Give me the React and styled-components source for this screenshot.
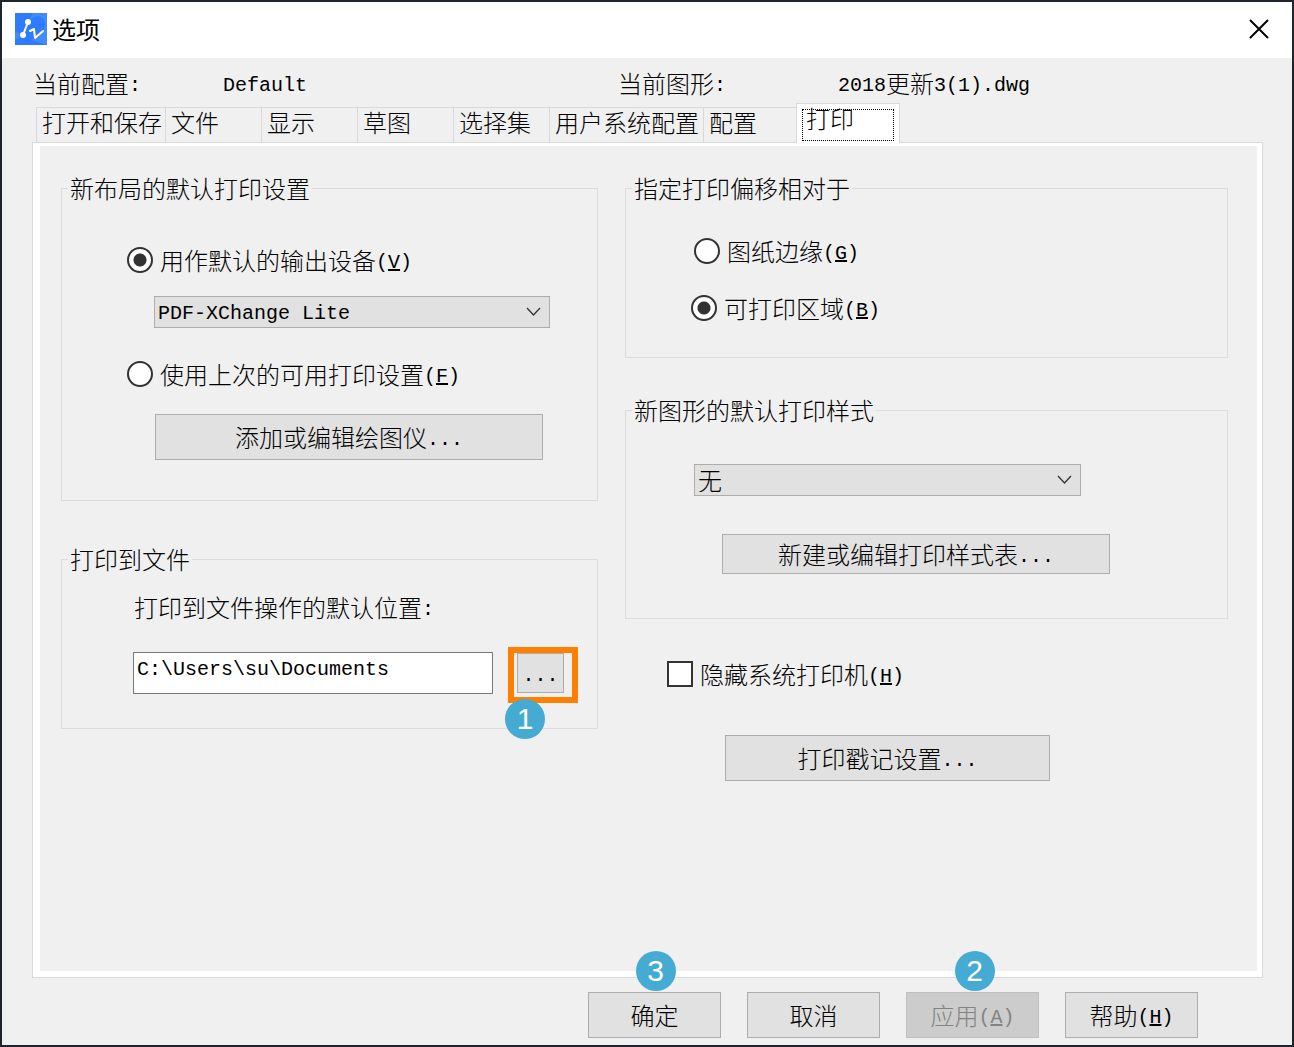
import React, { useState } from "react";
import styled, { createGlobalStyle } from "styled-components";

const GlobalStyle = createGlobalStyle`
  * {
    box-sizing: border-box;
  }

  body {
    margin: 0;
    background: #20242b;
  }

  body, button, input, select {
    color: #000;
    font-family: "Noto Sans CJK SC", sans-serif;
    font-size: 24px;
    font-weight: 300;
    line-height: 24px;
  }
`;

const Window = styled.div`
  display: flex;
  flex-direction: column;
  min-height: 100vh;
  border: 2px solid #20242b;
  background: #f0f0f0;
`;

const TitleBar = styled.header`
  display: flex;
  align-items: center;
  height: 56px;
  padding: 0 22px 2px 13px;
  background: #fff;

  h1 {
    flex: 1;
    margin: 0 0 0 5px;
    font-size: 24px;
    font-weight: 400;
  }
`;

const CloseButton = styled.button`
  display: flex;
  padding: 0;
  border: 0;
  background: none;
`;

const Body = styled.main`
  display: flex;
  flex: 1;
  flex-direction: column;
  padding: 0 29px 0 30px;
`;

const Info = styled.dl`
  display: grid;
  grid-template-columns: 38fr 79fr 44fr 85fr;
  margin: 0;
  padding: 13px 0 8px 1px;

  dd {
    margin: 0;
  }
`;

/* half-width characters take half of a full-width cell */
const Latin = styled.span`
  font-family: "Liberation Mono", monospace;
  font-size: 20px;
  font-weight: 400;
  line-height: 12px;
  vertical-align: 2px;
`;

const TabList = styled.div`
  display: flex;
  align-items: flex-end;
  padding-left: 4px;
`;

const Tab = styled.button`
  width: ${props => props.$width}px;
  height: 35px;
  padding: 0 0 7px 5px;
  border: 1px solid #d9d9d9;
  border-width: 1px 0 0 1px;
  background: #f0f0f0;
  text-align: left;
  white-space: nowrap;

  &[aria-selected="true"] {
    z-index: 1;
    height: 40px;
    margin-bottom: -1px;
    padding: 4px 5px 2px;
    border-width: 1px 1px 0 1px;
    background: #fff;
  }

  span {
    display: block;
    height: 32px;
    padding-left: 3px;
    border: 1px dotted #000;
    line-height: 16px;
  }
`;

const Panel = styled.section`
  display: grid;
  flex: 1;
  grid-template-columns: 537fr 603fr;
  align-items: start;
  gap: 27px;
  padding: 33px 34px 40px 28px;
  border: 1px solid #d9d9d9;
  background: #f0f0f0;
  box-shadow: inset 7px 3px #fff, inset -5px -6px #fff;
`;

const Column = styled.div`
  display: flex;
  flex-direction: column;
`;

const Group = styled.fieldset`
  min-width: 0;
  margin: ${props => props.$top || 0}px 0 0;
  padding: 0 0 ${props => props.$bottom}px 6px;
  border: 1px solid #dcdcdc;

  legend {
    padding: 0 2px;
  }
`;

const Line = styled.div`
  display: flex;
  align-items: center;
  margin: ${props => props.$top}px ${props => props.$right || 0}px 0 ${props => props.$left}px;
`;

const Choice = styled.label`
  display: flex;
  align-items: center;
  gap: 7px;

  input {
    appearance: none;
    width: 26px;
    height: 26px;
    margin: 0;
    border: 2px solid #333;
    background: #fff;
  }

  input[type="radio"] {
    border-radius: 50%;
  }

  input[type="radio"]:checked {
    background: radial-gradient(circle, #333 6px, #fff 7px);
  }

  input[type="checkbox"]:checked {
    box-shadow: inset 0 0 0 4px #fff;
    background: #333;
  }
`;

const SelectBox = styled.div`
  position: relative;
  flex: 1;

  svg {
    position: absolute;
    top: 11px;
    right: 9px;
    pointer-events: none;
  }
`;

const Select = styled.select`
  appearance: none;
  display: block;
  width: 100%;
  height: 32px;
  padding: 0 32px 0 3px;
  border: 1px solid #adadad;
  border-radius: 0;
  background: #e1e1e1;
`;

const LatinSelect = styled(Select)`
  padding-top: 4px;
  font-family: "Liberation Mono", monospace;
  font-size: 20px;
  font-weight: 400;
`;

const Button = styled.button`
  flex: 1;
  height: ${props => props.$height || 46}px;
  padding: 0;
  border: 1px solid #adadad;
  background: #e1e1e1;
  white-space: nowrap;

  &:disabled {
    border-color: #bfbfbf;
    background: #ccc;
    color: #838383;
  }
`;

const PathInput = styled.input`
  flex: 1;
  min-width: 0;
  height: 42px;
  padding: 0 3px 8px;
  border: 1px solid #7a7a7a;
  background: #fff;
  font-family: "Liberation Mono", monospace;
  font-size: 20px;
  font-weight: 400;
`;

const Browse = styled.div`
  position: relative;
  display: flex;
  width: 47px;
  margin-left: 24px;
`;

const Highlight = styled.div`
  position: absolute;
  inset: -6px -14px -10px -9px;
  border: 6px solid #ff8000;
  pointer-events: none;
`;

const Badge = styled.span`
  position: absolute;
  top: ${props => props.$top}px;
  left: ${props => props.$left};
  width: 40px;
  height: 40px;
  border-radius: 50%;
  background: #45abd3;
  color: #fff;
  font-family: "Liberation Sans", Arial, sans-serif;
  font-size: 30px;
  font-weight: 400;
  line-height: 40px;
  text-align: center;
`;

const Footer = styled.footer`
  display: flex;
  justify-content: flex-end;
  gap: 26px;
  padding: 14px 65px 7px 0;
`;

const FooterItem = styled.div`
  position: relative;
  display: flex;
  width: 133px;
`;

const tabs = [
  { name: "打开和保存", width: 129 },
  { name: "文件", width: 96 },
  { name: "显示", width: 96 },
  { name: "草图", width: 96 },
  { name: "选择集", width: 96 },
  { name: "用户系统配置", width: 154 },
  { name: "配置", width: 93 },
  { name: "打印", width: 104 }
];

const Logo = () => (
  <svg width="32" height="32" viewBox="0 0 32 32" aria-hidden="true">
    <rect width="32" height="32" fill="#2f7bff" />
    <path d="M14 8C20 1 29 2 30 10C31 18 24 25 16 27L32 32V0H18Z" fill="#4389ff" />
    <path d="M0 20C4 17 7 23 3 26L0 27Z" fill="#4589ff" />
    <g fill="none" stroke="#fff" strokeWidth="2" strokeLinecap="round" strokeLinejoin="round">
      <path d="M13 9L8 22" />
      <path d="M15 18L19 16L20 25L28 18" />
    </g>
    <circle cx="13" cy="9" r="3" fill="#fff" />
    <circle cx="8" cy="22" r="3" fill="#fff" />
  </svg>
);

const Chevron = () => (
  <svg width="15" height="10" viewBox="0 0 15 10" aria-hidden="true">
    <path d="M1 1L7.500 8L14 1" fill="none" stroke="#333" strokeWidth="1.300" />
  </svg>
);

const Key = ({ children }) => (
  <Latin>
    (<u>{children}</u>)
  </Latin>
);

const App = () => {
  const [tab, setTab] = useState("打印");
  const [device, setDevice] = useState("default");
  const [offset, setOffset] = useState("area");

  return (
    <Window>
      <GlobalStyle />
      <TitleBar>
        <Logo />
        <h1>选项</h1>
        <CloseButton aria-label="关闭">
          <svg width="22" height="22" viewBox="0 0 22 22">
            <path d="M2 2L20 20M20 2L2 20" stroke="#000" strokeWidth="2" />
          </svg>
        </CloseButton>
      </TitleBar>

      <Body>
        <Info>
          <dt>当前配置<Latin>:</Latin></dt>
          <dd><Latin>Default</Latin></dd>
          <dt>当前图形<Latin>:</Latin></dt>
          <dd>
            <Latin>2018</Latin>更新<Latin>3(1).dwg</Latin>
          </dd>
        </Info>

        <TabList role="tablist">
          {tabs.map(({ name, width }) => (
            <Tab
              key={name}
              role="tab"
              aria-selected={tab === name}
              $width={width}
              onClick={() => setTab(name)}
            >
              {tab === name ? <span>{name}</span> : name}
            </Tab>
          ))}
        </TabList>

        <Panel role="tabpanel">
          <Column>
            <Group $bottom={40}>
              <legend>新布局的默认打印设置</legend>
              <Line $top={47} $left={59}>
                <Choice>
                  <input
                    type="radio"
                    name="device"
                    checked={device === "default"}
                    onChange={() => setDevice("default")}
                  />
                  <span>用作默认的输出设备<Key>V</Key></span>
                </Choice>
              </Line>
              <Line $top={23} $left={86} $right={47}>
                <SelectBox>
                  <LatinSelect aria-label="输出设备">
                    <option>PDF-XChange Lite</option>
                  </LatinSelect>
                  <Chevron />
                </SelectBox>
              </Line>
              <Line $top={33} $left={59}>
                <Choice>
                  <input
                    type="radio"
                    name="device"
                    checked={device === "last"}
                    onChange={() => setDevice("last")}
                  />
                  <span>使用上次的可用打印设置<Key>F</Key></span>
                </Choice>
              </Line>
              <Line $top={27} $left={87} $right={54}>
                <Button>添加或编辑绘图仪<Latin>...</Latin></Button>
              </Line>
            </Group>

            <Group $top={46} $bottom={34}>
              <legend>打印到文件</legend>
              <Line $top={24} $left={66}>
                <label htmlFor="path">打印到文件操作的默认位置<Latin>:</Latin></label>
              </Line>
              <Line $top={33} $left={65} $right={33}>
                <PathInput id="path" defaultValue="C:\Users\su\Documents" />
                <Browse>
                  <Button $height={40} aria-label="浏览"><Latin>...</Latin></Button>
                  <Highlight />
                  <Badge $top={46} $left="-12px">1</Badge>
                </Browse>
              </Line>
            </Group>
          </Column>

          <Column>
            <Group $bottom={36}>
              <legend>指定打印偏移相对于</legend>
              <Line $top={38} $left={62}>
                <Choice>
                  <input
                    type="radio"
                    name="offset"
                    checked={offset === "edge"}
                    onChange={() => setOffset("edge")}
                  />
                  <span>图纸边缘<Key>G</Key></span>
                </Choice>
              </Line>
              <Line $top={31} $left={59}>
                <Choice>
                  <input
                    type="radio"
                    name="offset"
                    checked={offset === "area"}
                    onChange={() => setOffset("area")}
                  />
                  <span>可打印区域<Key>B</Key></span>
                </Choice>
              </Line>
            </Group>

            <Group $top={40} $bottom={44}>
              <legend>新图形的默认打印样式</legend>
              <Line $top={42} $left={62} $right={146}>
                <SelectBox>
                  <Select aria-label="打印样式">
                    <option>无</option>
                  </Select>
                  <Chevron />
                </SelectBox>
              </Line>
              <Line $top={38} $left={90} $right={117}>
                <Button $height={40}>新建或编辑打印样式表<Latin>...</Latin></Button>
              </Line>
            </Group>

            <Line $top={42} $left={42}>
              <Choice>
                <input type="checkbox" />
                <span>隐藏系统打印机<Key>H</Key></span>
              </Choice>
            </Line>
            <Line $top={48} $left={100} $right={178}>
              <Button>打印戳记设置<Latin>...</Latin></Button>
            </Line>
          </Column>
        </Panel>

        <Footer>
          <FooterItem>
            <Button>确定</Button>
            <Badge $top={-41} $left="calc(50% - 19px)">3</Badge>
          </FooterItem>
          <FooterItem>
            <Button>取消</Button>
          </FooterItem>
          <FooterItem>
            <Button disabled>应用<Key>A</Key></Button>
            <Badge $top={-41} $left="calc(50% - 18px)">2</Badge>
          </FooterItem>
          <FooterItem>
            <Button>帮助<Key>H</Key></Button>
          </FooterItem>
        </Footer>
      </Body>
    </Window>
  );
};

export default App;
